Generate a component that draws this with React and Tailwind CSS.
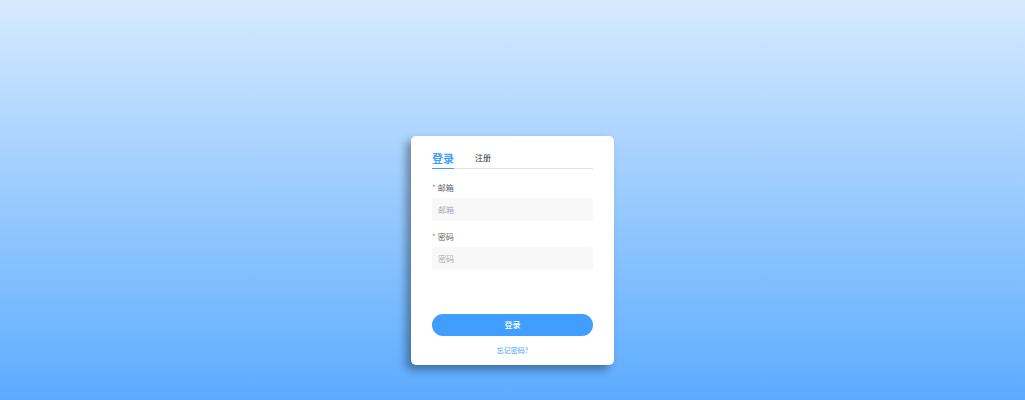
import React, { useState } from 'react';
import clsx from 'clsx';

const tabs = [
  { key: 'login', label: '登录' },
  { key: 'register', label: '注册' }
];

const fields = [
  { id: 'email', label: '邮箱', type: 'email' },
  { id: 'password', label: '密码', type: 'password' }
];

const FormField = ({ id, label, type, value, onChange }) => (
  <div className="flex flex-col gap-[3px]">
    <label htmlFor={id} className="flex gap-0.5 text-[8px] leading-[14px] text-[#606266]">
      <span className="text-[#f56c6c]" aria-hidden="true">*</span>
      {label}
    </label>
    <input
      id={id}
      type={type}
      value={value}
      onChange={onChange}
      placeholder={label}
      required
      className="h-[23px] w-full rounded-xs bg-[#f8f8f8] px-1.5 text-[8px] text-[#606266] outline-none placeholder:text-[#a8abb2]"
    />
  </div>
);

const App = () => {
  const [activeTab, setActiveTab] = useState('login');
  const [form, setForm] = useState({ email: '', password: '' });

  return (
    <main className="flex min-h-screen items-start justify-center bg-linear-to-b/srgb from-[#d6eafe] to-[#5cabff] pt-34 pb-8 font-['Noto_Sans_CJK_SC',sans-serif]">
      <form
        onSubmit={(e) => e.preventDefault()}
        className="w-[203px] rounded-[5px] bg-white px-[21px] pt-3 pb-[9px] shadow-[-5px_5px_8px_rgba(0,0,0,0.36)]"
      >
        {/* Tabs */}
        <div role="tablist" className="flex gap-[21px] border-b border-[#dfe2e8]">
          {tabs.map((tab) => (
            <button
              key={tab.key}
              type="button"
              role="tab"
              aria-selected={activeTab === tab.key}
              onClick={() => setActiveTab(tab.key)}
              className={clsx(
                '-mb-px h-[21px] border-b',
                activeTab === tab.key
                  ? 'border-[#409eff] text-[11px] font-bold text-[#409eff]'
                  : 'border-transparent text-[8px] text-[#303133]'
              )}
            >
              {tab.label}
            </button>
          ))}
        </div>

        <div className="mt-3 flex flex-col gap-[9px]">
          {fields.map((field) => (
            <FormField
              key={field.id}
              {...field}
              value={form[field.id]}
              onChange={(e) => setForm({ ...form, [field.id]: e.target.value })}
            />
          ))}
        </div>

        <button
          type="submit"
          className="mt-11 h-[22px] w-full rounded-full bg-[#409eff] text-[8px] font-medium text-white"
        >
          登录
        </button>
        <div className="mt-2 flex h-3 items-center justify-center">
          <a href="#forgot" className="text-[7px] leading-3 text-[#409eff]">忘记密码?</a>
        </div>
      </form>
    </main>
  );
};

export default App;
